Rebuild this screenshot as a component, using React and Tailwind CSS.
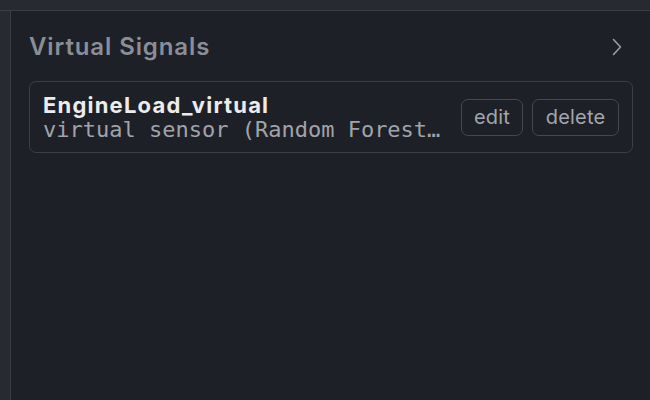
import React from "react";

export default function App() {
  return (
    <div className="w-[650px] h-[400px] overflow-hidden bg-[#1e2027] flex flex-col" style={{ fontFamily: "Inter, 'Liberation Sans', sans-serif" }}>
      <div className="h-[11px] shrink-0 bg-[#272a31] border-b border-[#3b3e46]" />
      <div className="flex flex-1 min-h-0">
        <div className="w-[11px] shrink-0 bg-[#272a31] border-r border-[#3b3e46]" />
        <div className="flex-1 min-w-0 pl-[18px] pr-[17px] pt-[21px]">
          <div className="flex items-center justify-between h-[30px]">
            <div className="text-[24px] font-semibold text-[#8a8e97] tracking-[0.9px] leading-[30px]">Virtual Signals</div>
            <svg width="12" height="18" viewBox="0 0 12 18" className="mr-[10px]">
              <path d="M2.5 1.5 L9.5 9 L2.5 16.5" fill="none" stroke="#9a9da5" strokeWidth="1.6" strokeLinecap="round" strokeLinejoin="round" />
            </svg>
          </div>
          <div className="mt-[19px] h-[72px] rounded-[7px] border border-[#3c3f47] flex items-center pl-[13px] pr-[13px] gap-[13px]">
            <div className="flex-1 min-w-0 flex flex-col">
              <div className="text-[22px] font-bold text-[#ececee] leading-[25px] tracking-[1.2px]">EngineLoad_virtual</div>
              <div className="text-[22px] text-[#a1a3aa] leading-[24px] truncate" style={{ fontFamily: "'DejaVu Sans Mono', monospace" }}>virtual sensor (Random Forest Regressor)</div>
            </div>
            <div className="flex gap-[9px] shrink-0">
              <button className="h-[37px] w-[62px] rounded-[7px] border border-[#45484f] text-[20px] text-[#a3a6ad] tracking-[0.2px]">edit</button>
              <button className="h-[37px] w-[87px] rounded-[7px] border border-[#45484f] text-[20px] text-[#a3a6ad] tracking-[0.2px]">delete</button>
            </div>
          </div>
        </div>
      </div>
    </div>
  );
}
